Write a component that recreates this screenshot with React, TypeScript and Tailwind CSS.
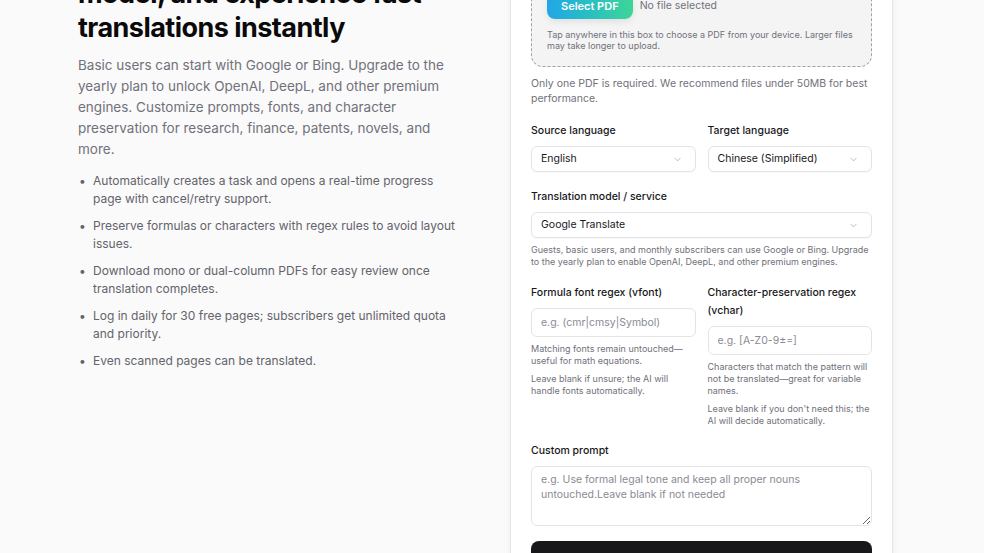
import { ChevronDown } from 'lucide-react';

const features = [
  'Automatically creates a task and opens a real-time progress page with cancel/retry support.',
  'Preserve formulas or characters with regex rules to avoid layout issues.',
  'Download mono or dual-column PDFs for easy review once translation completes.',
  'Log in daily for 30 free pages; subscribers get unlimited quota and priority.',
  'Even scanned pages can be translated.',
];

function SelectBox({ value }: { value: string }) {
  return (
    <div className="flex h-[26px] items-center justify-between rounded-md border border-[#e4e4e7] bg-white pl-[9px] pr-[12px] text-[10.5px] text-[#18181b] shadow-[0_1px_1px_rgba(0,0,0,0.03)]">
      <span>{value}</span>
      <ChevronDown className="h-[11px] w-[11px] text-[#a1a1aa]" strokeWidth={1.5} />
    </div>
  );
}

function Label({ children }: { children: React.ReactNode }) {
  return <div className="text-[10.5px] font-medium leading-[18px] text-[#18181b]">{children}</div>;
}

function Hint({ children }: { children: React.ReactNode }) {
  return <p className="mt-[6px] text-[9px] leading-[12px] text-[#71717a]">{children}</p>;
}

export default function App() {
  return (
    <div
      className="h-screen overflow-hidden bg-[#fafafa]"
      style={{ fontFamily: 'Inter, "Noto Sans", sans-serif' }}
    >
      <div className="flex items-start pl-[78px]">
        {/* left intro column */}
        <div className="mt-[-57px] w-[382px] shrink-0">
          <h1 className="text-[27px] font-bold leading-[34px] tracking-[-0.02em] text-[#0a0a0a]">
            Translate PDFs with any AI model, and experience fast translations instantly
          </h1>
          <p className="mt-[10px] text-[13.5px] leading-[21px] text-[#71717a]">
            Basic users can start with Google or Bing. Upgrade to the yearly plan to unlock OpenAI, DeepL, and other
            premium engines. Customize prompts, fonts, and character preservation for research, finance, patents,
            novels, and more.
          </p>
          <ul className="mt-[12px] flex flex-col gap-[10px] text-[12px] leading-[17.5px] text-[#63636b]">
            {features.map(f => (
              <li key={f} className="flex">
                <span className="w-[15px] shrink-0 pl-[1px]">•</span>
                <span>{f}</span>
              </li>
            ))}
          </ul>
        </div>

        {/* upload card */}
        <div className="ml-[50px] mt-[-44px] w-[383px] shrink-0 rounded-xl border border-[#e4e4e7] bg-white px-[20px] pb-[20px] pt-[20px] shadow-[0_2px_8px_rgba(0,0,0,0.05)]">
          <div className="rounded-xl border border-dashed border-[#a1a1aa] bg-[#f4f4f5] px-[15px] pb-[15px] pt-[15px]">
            <div className="flex items-center gap-[7px]">
              <button className="h-[26px] rounded-lg bg-gradient-to-r from-[#22a6e6] to-[#3ed596] px-[14px] text-[11px] font-semibold text-white shadow-[0_3px_6px_rgba(0,0,0,0.08)]">
                Select PDF
              </button>
              <span className="text-[10.5px] text-[#71717a]">No file selected</span>
            </div>
            <p className="mt-[10px] text-[9px] leading-[11px] text-[#71717a]">
              Tap anywhere in this box to choose a PDF from your device. Larger files may take longer to upload.
            </p>
          </div>
          <p className="mt-[9px] text-[10.5px] leading-[15px] text-[#71717a]">
            Only one PDF is required. We recommend files under 50MB for best performance.
          </p>

          <div className="mt-[16px] grid grid-cols-2 gap-x-[12px]">
            <div>
              <Label>Source language</Label>
              <div className="mt-[6px]">
                <SelectBox value="English" />
              </div>
            </div>
            <div>
              <Label>Target language</Label>
              <div className="mt-[6px]">
                <SelectBox value="Chinese (Simplified)" />
              </div>
            </div>
          </div>

          <div className="mt-[16px]">
            <Label>Translation model / service</Label>
            <div className="mt-[6px]">
              <SelectBox value="Google Translate" />
            </div>
            <Hint>
              Guests, basic users, and monthly subscribers can use Google or Bing. Upgrade to the yearly plan to enable
              OpenAI, DeepL, and other premium engines.
            </Hint>
          </div>

          <div className="mt-[16px] grid grid-cols-2 gap-x-[12px]">
            <div>
              <Label>Formula font regex (vfont)</Label>
              <input
                placeholder="e.g. (cmr|cmsy|Symbol)"
                className="mt-[6px] h-[29px] w-full rounded-md border border-[#e4e4e7] bg-white px-[9px] text-[10.5px] text-[#18181b] outline-none placeholder:text-[#8a8a93]"
              />
              <Hint>Matching fonts remain untouched—useful for math equations.</Hint>
              <Hint>Leave blank if unsure; the AI will handle fonts automatically.</Hint>
            </div>
            <div>
              <Label>Character-preservation regex (vchar)</Label>
              <input
                placeholder="e.g. [A-Z0-9±=]"
                className="mt-[6px] h-[29px] w-full rounded-md border border-[#e4e4e7] bg-white px-[9px] text-[10.5px] text-[#18181b] outline-none placeholder:text-[#8a8a93]"
              />
              <Hint>Characters that match the pattern will not be translated—great for variable names.</Hint>
              <Hint>Leave blank if you don't need this; the AI will decide automatically.</Hint>
            </div>
          </div>

          <div className="mt-[15px]">
            <Label>Custom prompt</Label>
            <textarea
              placeholder="e.g. Use formal legal tone and keep all proper nouns untouched.Leave blank if not needed"
              className="mt-[6px] block h-[60px] w-full rounded-md border border-[#e4e4e7] bg-white px-[9px] pb-[5px] pt-[5px] text-[10.5px] leading-[15px] text-[#18181b] outline-none placeholder:text-[#8a8a93]"
            />
          </div>

          <button className="mt-[15px] h-[38px] w-full rounded-lg bg-[#18181b] text-[12px] font-semibold text-white">
            Start translation
          </button>
        </div>
      </div>
    </div>
  );
}
